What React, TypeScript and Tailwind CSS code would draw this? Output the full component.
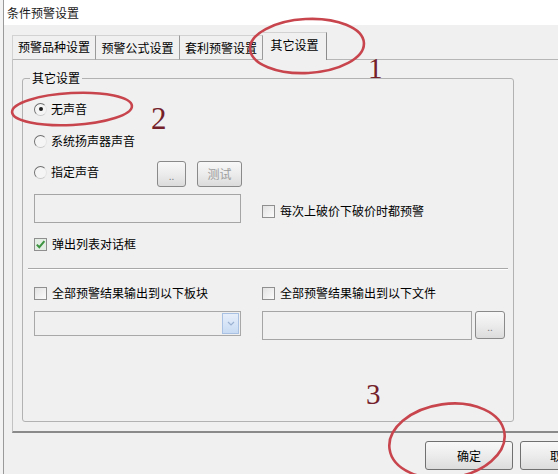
import type { ReactNode } from 'react';

const font = "font-['Noto_Sans_CJK_SC','Noto_Sans',sans-serif]";

function Radio({ label, checked }: { label: string; checked?: boolean }) {
  return (
    <div className="flex items-center gap-[4px] h-[16px] leading-[16px]">
      <span className="w-[13px] h-[13px] rounded-full border border-t-[#6f6f6f] border-l-[#6f6f6f] border-r-[#e4e4e4] border-b-[#c8c8c8] bg-[#f5f5f5] flex items-center justify-center">
        {checked && <span className="w-[4px] h-[4px] rounded-full bg-[#1e1e1e]" />}
      </span>
      <span>{label}</span>
    </div>
  );
}

function Check({ label, checked }: { label: string; checked?: boolean }) {
  return (
    <div className="flex items-center gap-[5px] h-[16px] leading-[16px]">
      <span
        className={`w-[13px] h-[13px] border border-[#8f8f8f] flex items-center justify-center ${
          checked ? 'bg-[#e4ede4]' : 'bg-linear-to-br from-[#e2e2e2] to-[#fbfbfb]'
        }`}
      >
        {checked && (
          <svg width="11" height="11" viewBox="0 0 11 11">
            <path d="M1.8 5.6 L4.3 8.2 L9.4 2.2" fill="none" stroke="#3c9440" strokeWidth="2" />
          </svg>
        )}
      </span>
      <span>{label}</span>
    </div>
  );
}

// tone: normal text, disabled text, or the small grey ".." of browse buttons
function Btn({ children, className, tone = 'normal' }: { children: ReactNode; className: string; tone?: 'normal' | 'disabled' | 'dots' }) {
  const toneClass =
    tone === 'disabled' ? 'text-[#9d9d9d]' : tone === 'dots' ? 'text-[#808080] text-[10px] pt-[3px]' : 'text-black';
  return (
    <div
      className={`flex items-center justify-center border border-[#8a8a8a] rounded-[3px] bg-linear-to-b from-[#f8f8f8] via-[#ececec] to-[#dcdcdc] leading-[16px] ${toneClass} ${className}`}
    >
      {children}
    </div>
  );
}

function Combo() {
  return (
    <div className="w-[207px] h-[25px] border border-[#a8a8a8] bg-[#f0f0f0] flex justify-end p-px">
      <div className="w-[17px] h-full border border-[#a9c1e2] bg-linear-to-b from-[#e6eefa] to-[#c8dbf3] flex items-center justify-center">
        <svg width="8" height="5" viewBox="0 0 8 5">
          <path d="M1 1 L4 4 L7 1" fill="none" stroke="#9bb2d3" strokeWidth="1.2" />
        </svg>
      </div>
    </div>
  );
}

export default function App() {
  return (
    <div className={`relative w-[558px] h-[474px] overflow-hidden bg-[#f0f0f0] text-[12px] text-black ${font} flex`}>
      <div className="w-[4px] h-full shrink-0 bg-[#f3f3f3] border-r border-[#9a9a9a]" />

      <div className="flex-1 min-w-0 flex flex-col">
        <div className="h-[25px] bg-white pl-[3px] flex items-center leading-[16px] text-[#1a1a1a]">条件预警设置</div>

        {/* tabs */}
        <div className="h-[35px] flex items-end pl-[8px]">
          <div className="w-[84px] h-[25px] pb-px flex items-center justify-center border border-[#d2d2d2] border-r-[#9a9a9a] border-b-[#b6b6b6]">
            预警品种设置
          </div>
          <div className="w-[84px] h-[25px] flex items-center justify-center border-t border-r border-b border-[#d2d2d2] border-r-[#9a9a9a] border-b-[#b6b6b6]">
            预警公式设置
          </div>
          <div className="w-[83px] h-[25px] flex items-center justify-center border-t border-r border-b border-[#d2d2d2] border-r-[#9a9a9a] border-b-[#b6b6b6]">
            套利预警设置
          </div>
          <div className="w-[64px] h-[28px] pb-[3px] flex items-center justify-center border-t border-r border-[#d2d2d2] border-r-[#8c8c8c]">
            其它设置
          </div>
          <div className="flex-1 h-full border-b border-[#b6b6b6]" />
        </div>

        {/* panel */}
        <div className="ml-[8px] h-[373px] border-l border-b-2 border-l-[#c2c2c2] border-b-[#8a8a8a] pt-[10px] pl-[9px]">
          <fieldset className="w-[492px] h-[352px] border border-[#b2b2b2] rounded-[3px] min-w-0">
            <legend className="ml-[7px] px-[2px] leading-[16px]">其它设置</legend>

            <div className="pl-[11px] flex flex-col">
              <div className="mt-[15px]">
                <Radio label="无声音" checked />
              </div>
              <div className="mt-[16px]">
                <Radio label="系统扬声器声音" />
              </div>
              <div className="mt-[12px] flex h-[26px]">
                <div className="w-[123px] pt-[3px]">
                  <Radio label="指定声音" />
                </div>
                <Btn className="w-[29px] h-[26px]" tone="dots">..</Btn>
                <Btn className="w-[45px] h-[26px] ml-[11px]" tone="disabled">
                  测试
                </Btn>
              </div>
              <div className="mt-[7px] flex items-start">
                <div className="w-[207px] h-[29px] border border-[#a5a5a5] bg-[#f0f0f0]" />
                <div className="ml-[21px] mt-[9px]">
                  <Check label="每次上破价下破价时都预警" />
                </div>
              </div>
              <div className="mt-[13px]">
                <Check label="弹出列表对话框" checked />
              </div>
            </div>

            <div className="mt-[16px] ml-[5px] w-[480px] border-t border-b border-t-[#a8a8a8] border-b-white" />

            <div className="pl-[11px] mt-[15px] flex">
              <div className="w-[228px]">
                <Check label="全部预警结果输出到以下板块" />
              </div>
              <Check label="全部预警结果输出到以下文件" />
            </div>
            <div className="pl-[11px] mt-[10px] flex items-start">
              <Combo />
              <div className="ml-[21px] w-[210px] h-[29px] border border-[#a5a5a5] bg-[#f0f0f0]" />
              <Btn className="ml-[3px] w-[30px] h-[28px]" tone="dots">..</Btn>
            </div>
          </fieldset>
        </div>

        {/* footer buttons; the dialog continues past the right edge of the shot */}
        <div className="mt-[8px] flex gap-[7px] pl-[421px]">
          <Btn className="w-[88px] h-[29px] shrink-0 border-[#707070]">确定</Btn>
          <Btn className="w-[88px] h-[29px] shrink-0 border-[#707070] justify-start pl-[29px]">取消</Btn>
        </div>
      </div>

      {/* annotations drawn over the screenshot */}
      <svg className="absolute inset-0 pointer-events-none" width="558" height="474" viewBox="0 0 558 474">
        <g fill="none" stroke="#c8454e" strokeWidth="2.6">
          <ellipse cx="307" cy="46" rx="57" ry="27" transform="rotate(-3 307 46)" />
          <ellipse cx="72" cy="109" rx="60" ry="16" transform="rotate(-3 72 109)" />
          <ellipse cx="447" cy="441" rx="58" ry="37" transform="rotate(-8 447 441)" />
        </g>
        <g fill="#74212a" fontFamily="'Liberation Serif', serif">
          <text x="368" y="78" fontSize="29">1</text>
          <text x="151" y="129" fontSize="31">2</text>
          <text x="366" y="404" fontSize="29">3</text>
        </g>
      </svg>
    </div>
  );
}
